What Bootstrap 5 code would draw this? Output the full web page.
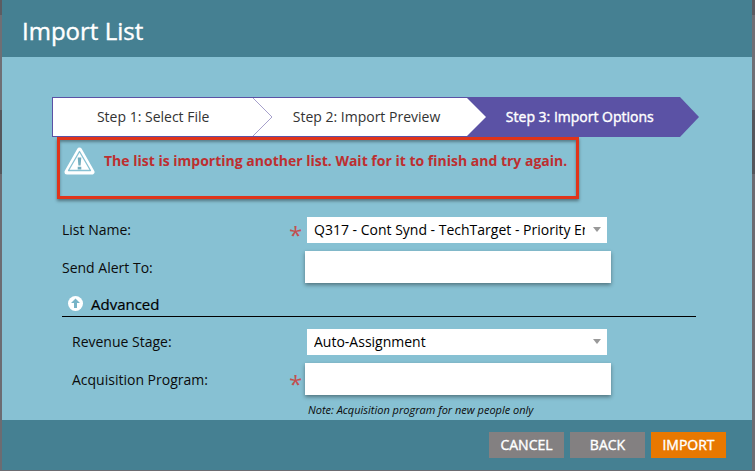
<!DOCTYPE html>
<html lang="en">
<head>
<meta charset="utf-8">
<meta name="viewport" content="width=device-width, initial-scale=1">
<title>Import List</title>
<link href="https://cdn.jsdelivr.net/npm/bootstrap@5.3.0/dist/css/bootstrap.min.css" rel="stylesheet">
<style>
  body { font-family: "Open Sans", "Noto Sans", sans-serif; font-size: 14px; line-height: 20px; color: #0b0b0b;
    background: linear-gradient(#5c5c62 15px, #6f6f75 15px 110px, #55575c 110px 174px, #6c6c72 174px); padding: 0 3px 1px 2px; }
  .dialog-box { min-height: calc(100vh - 1px); background: #87c1d3; }
  .dialog-bar { background: #458092; }
  .dialog-head { height: 57px; padding: 4px 20px 0; }
  .dialog-head h1 { font-size: 24px; line-height: 32px; color: #fff; font-weight: 400; -webkit-text-stroke: .4px #fff; }
  .dialog-main { padding: 40px 50px 0; }
  .dialog-foot { height: 50px; padding: 0 26px; gap: 6px; }
  .steps { height: 40px; margin-right: 6px; }
  .step-item { flex: 1 1 0; background: #fff; border: 1px solid #5b52a5; border-width: 1px 0; color: #333; padding-left: 13px; }
  .step-item:first-child { border-left-width: 1px; padding-left: 0; }
  .step-item.current { background: #5b52a5; color: #fff; -webkit-text-stroke: .4px #fff; }
  .step-arrow { top: -1px; left: 100%; width: 20px; height: 40px; z-index: 1; }
  .alert-frame { width: 522px; max-width: 100%; height: 62px; margin-left: 5px; padding: 7px 4px; gap: 9px; border: 3px solid #e0341a;
    box-shadow: 0 2px 3px rgba(0,0,0,.4), inset 0 2px 3px rgba(0,0,0,.35); color: #bd2f30; font-weight: 700; }
  .form-area { padding: 0 6px 0 10px; margin-top: 18px; }
  .field-label { width: 227px; }
  .sub-area .field-label { width: 217px; }
  .sub-area { padding: 12px 0 0 10px; }
  .field-star { width: 18px; height: 20px; font-size: 24px; line-height: 30px; color: #c2504f; }
  .pick, .entry { color: #000; border: 0; border-radius: 0; background-color: #fff; font-size: 14px; }
  .pick { width: 300px; height: 26px; line-height: 20px; padding: 3px 22px 3px 7px; background-position: right 5px top 10px; background-size: 10px 5px;
    background-image: url("data:image/svg+xml,%3Csvg xmlns='http://www.w3.org/2000/svg' viewBox='0 0 10 5'%3E%3Cpath d='M1 0h8L5 5z' fill='%23999'/%3E%3C/svg%3E"); }
  .entry { width: 306px; height: 32px; margin: 8px 0 0 -2px; padding: 4px 8px; box-shadow: 0 2px 4px rgba(0,0,0,.4); }
  .entry-label { padding-top: 10px; }
  .section-head { height: 34px; padding: 9px 6px 0; gap: 8px; border-bottom: 1px solid #000; }
  .section-head h2 { font-size: 15px; line-height: 24px; -webkit-text-stroke: .2px #000; color: #000; font-weight: 400; }
  .note { font-size: 11px; line-height: 16px; font-style: italic; margin: 7px 0 0 236px; }
  .act { width: 75px; height: 26px; border: 0; border-radius: 0; padding: 0; font-size: 14px; line-height: 26px; color: #fff; background: #838081; -webkit-text-stroke: .4px #fff; }
  .act:hover { background: #727071; color: #fff; }
  .act-main, .act-main:hover { background: #e87800; }
</style>
</head>
<body>
<main class="dialog-box d-flex flex-column">
  <header class="dialog-bar dialog-head d-flex align-items-center"><h1 class="m-0">Import List</h1></header>
  <div class="dialog-main flex-grow-1">
    <ol class="steps d-flex list-unstyled mb-0 pe-3">
      <li class="step-item position-relative d-flex align-items-center justify-content-center">Step 1: Select File
        <svg class="step-arrow position-absolute" viewBox="0 0 20 40" aria-hidden="true"><path d="M0 1L19 20L0 39" fill="#fff" stroke="#a6a0cb"/></svg></li>
      <li class="step-item position-relative d-flex align-items-center justify-content-center">Step 2: Import Preview
        <svg class="step-arrow position-absolute" viewBox="0 0 20 40" aria-hidden="true"><path d="M0 1L19 20L0 39z" fill="#fff"/></svg></li>
      <li class="step-item current position-relative d-flex align-items-center justify-content-center" aria-current="step">Step 3: Import Options
        <svg class="step-arrow position-absolute" viewBox="0 0 20 40" aria-hidden="true"><path d="M0 0L19 20L0 40z" fill="#5b52a5"/></svg></li>
    </ol>
    <div class="alert-frame d-flex" role="alert">
      <svg class="flex-shrink-0" width="31" height="28" viewBox="0 0 31 28" aria-hidden="true"><path d="M15.500 3L28 25H3z" fill="#fff" stroke="#fff" stroke-width="5" stroke-linejoin="round"/><path d="M15.500 4.500L26.500 23.500H4.500z" fill="#fff" stroke="#87c1d3" stroke-width="1.300" stroke-linejoin="round"/><path d="M13.700 10.500h3.600l-.7 8h-2.200zM13.700 19.700h3.600v2.700h-3.600z" fill="#72aebf"/></svg>
      <span class="pt-1">The list is importing another list. Wait for it to finish and try again.</span>
    </div>
    <form class="form-area">
      <div class="d-flex align-items-center">
        <label class="field-label" for="listName">List Name:</label><span class="field-star" aria-hidden="true">*</span>
        <select class="form-select pick" id="listName" required><option>Q317 - Cont Synd - TechTarget - Priority Engine</option></select>
      </div>
      <div class="d-flex align-items-center">
        <label class="field-label entry-label" for="sendAlert">Send Alert To:</label><span class="field-star"></span>
        <input class="form-control entry" id="sendAlert" type="text">
      </div>
      <div class="section-head d-flex">
        <svg class="flex-shrink-0 mt-1" width="15" height="15" viewBox="0 0 15 15" aria-hidden="true"><circle cx="7.500" cy="7.500" r="7.500" fill="#fff"/><path d="M7.500 2.500L12 7H9v5H6V7H3z" fill="#78b4c7"/></svg>
        <h2 class="m-0">Advanced</h2>
      </div>
      <div class="sub-area">
        <div class="d-flex align-items-center">
          <label class="field-label" for="stage">Revenue Stage:</label><span class="field-star"></span>
          <select class="form-select pick" id="stage"><option>Auto-Assignment</option></select>
        </div>
        <div class="d-flex align-items-center">
          <label class="field-label entry-label" for="program">Acquisition Program:</label><span class="field-star pt-1" aria-hidden="true">*</span>
          <input class="form-control entry" id="program" type="text" required>
        </div>
        <p class="note">Note: Acquisition program for new people only</p>
      </div>
    </form>
  </div>
  <footer class="dialog-bar dialog-foot d-flex align-items-center justify-content-end">
    <button class="btn act" type="button">CANCEL</button>
    <button class="btn act" type="button">BACK</button>
    <button class="btn act act-main" type="button">IMPORT</button>
  </footer>
</main>
<script src="https://cdn.jsdelivr.net/npm/bootstrap@5.3.0/dist/js/bootstrap.bundle.min.js"></script>
</body>
</html>
